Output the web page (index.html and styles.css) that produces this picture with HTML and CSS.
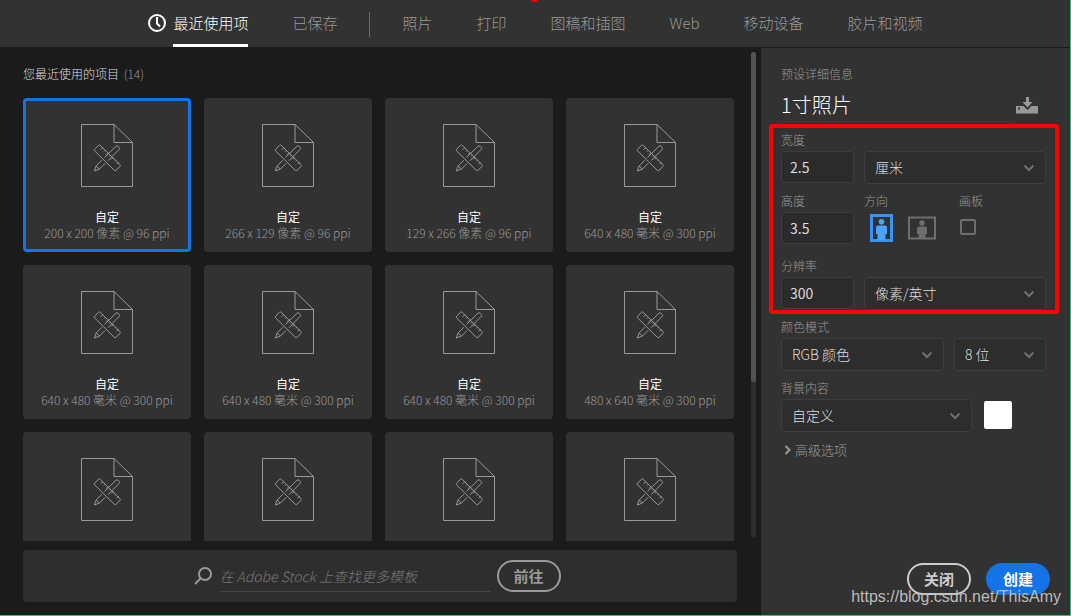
FILE: index.html
```html
<!DOCTYPE html>
<html lang="zh-CN">
<head>
    <meta charset="UTF-8">
    <meta name="viewport" content="width=device-width, initial-scale=1.0">
    <title>新建文档</title>
    <link rel="stylesheet" href="styles.css">
</head>
<body>
    <svg class="symbols" width="0" height="0">
        <symbol id="doc" viewBox="0 0 52 63">
            <path d="M33 .5H.5v62h51V18.500L33 .5v18h18.500"/>
            <path d="M23.500 33.500 35 22.200q1-.8 2 0l1.200 1.200q.8 1 0 2L27 36.700M20.800 36.300l-5.600 5.600-1.900 5.100 5.100-1.900 5.700-5.700M15.200 41.900l3.200 3.200"/>
            <path d="M17.500 21.300 13.600 25.200q-.8.9 0 1.700L33.300 46.300q.9.8 1.700 0l4-3.900q.8-.9 0-1.700L19.200 21.300q-.9-.8-1.700 0z"/>
            <path d="m21.700 23.800-2 2m4.700.4-1.500 1.500m4.100.9-2 2m4.700.4-1.500 1.500m4.100.9-2 2m4.700.4-1.500 1.500m4.100.9-2 2"/>
        </symbol>
    </svg>

    <header>
        <nav class="tabs">
            <a href="#" class="active">
                <svg class="clock" width="20" height="20" viewBox="0 0 20 20">
                    <circle cx="10" cy="10" r="8"/>
                    <path d="M10 4v6.500l3 3"/>
                </svg>
                <span>最近使用项</span>
            </a>
            <a href="#">已保存</a>
            <i class="divider"></i>
            <a href="#">照片</a>
            <a href="#">打印</a>
            <a href="#">图稿和插图</a>
            <a href="#">Web</a>
            <a href="#">移动设备</a>
            <a href="#">胶片和视频</a>
        </nav>
        <span class="marker"></span>
    </header>

    <div class="content">
        <main>
            <div class="recent">
                <div class="list">
                    <h2>您最近使用的项目 <span>(14)</span></h2>
                    <div class="grid">
                        <button class="card selected"><svg class="doc"><use href="#doc"/></svg><b>自定</b><small>200 x 200 像素 @ 96 ppi</small></button>
                        <button class="card"><svg class="doc"><use href="#doc"/></svg><b>自定</b><small>266 x 129 像素 @ 96 ppi</small></button>
                        <button class="card"><svg class="doc"><use href="#doc"/></svg><b>自定</b><small>129 x 266 像素 @ 96 ppi</small></button>
                        <button class="card"><svg class="doc"><use href="#doc"/></svg><b>自定</b><small>640 x 480 毫米 @ 300 ppi</small></button>
                        <button class="card"><svg class="doc"><use href="#doc"/></svg><b>自定</b><small>640 x 480 毫米 @ 300 ppi</small></button>
                        <button class="card"><svg class="doc"><use href="#doc"/></svg><b>自定</b><small>640 x 480 毫米 @ 300 ppi</small></button>
                        <button class="card"><svg class="doc"><use href="#doc"/></svg><b>自定</b><small>640 x 480 毫米 @ 300 ppi</small></button>
                        <button class="card"><svg class="doc"><use href="#doc"/></svg><b>自定</b><small>480 x 640 毫米 @ 300 ppi</small></button>
                        <button class="card"><svg class="doc"><use href="#doc"/></svg></button>
                        <button class="card"><svg class="doc"><use href="#doc"/></svg></button>
                        <button class="card"><svg class="doc"><use href="#doc"/></svg></button>
                        <button class="card"><svg class="doc"><use href="#doc"/></svg></button>
                    </div>
                </div>
                <div class="scrollbar"><div class="thumb"></div></div>
            </div>

            <form class="stock">
                <label for="stock">
                    <svg width="20" height="20" viewBox="0 0 20 20">
                        <circle cx="12" cy="8" r="6"/>
                        <path d="M7.500 12.500 2 18"/>
                    </svg>
                </label>
                <input type="text" id="stock" placeholder="在 Adobe Stock 上查找更多模板">
                <button type="button" class="pill">前往</button>
            </form>
        </main>

        <aside>
            <label class="caption" for="name">预设详细信息</label>
            <div class="name-row">
                <input type="text" id="name" value="1寸照片">
                <button class="save">
                    <svg width="22" height="17" viewBox="0 0 22 17">
                        <path d="M10 0h3v5h3.500l-5 5.500-5-5.500H10z"/>
                        <path d="M0 9h7.500l4 4 4-4H22v7.500H0zM2 10.500v2h2v-2z" fill-rule="evenodd"/>
                    </svg>
                </button>
            </div>

            <div class="row">
                <div class="field short">
                    <label for="width">宽度</label>
                    <input type="text" id="width" value="2.5">
                </div>
                <div class="field wide">
                    <select id="unit"><option>厘米</option></select>
                </div>
            </div>

            <div class="row tall">
                <div class="field short">
                    <label for="height">高度</label>
                    <input type="text" id="height" value="3.5">
                </div>
                <fieldset class="orientation">
                    <legend>方向</legend>
                    <div class="choices">
                        <input type="radio" name="orient" id="portrait" checked>
                        <label for="portrait">
                            <svg width="24" height="28" viewBox="0 0 24 28">
                                <path class="frame" d="M1.500 1.500h20v25h-20z"/>
                                <circle cx="11.500" cy="7.700" r="2.800"/>
                                <path d="M8 11.500h7q2 0 2 2v6.500h-1.500v6h-8v-6H6v-6.500q0-2 2-2z"/>
                            </svg>
                        </label>
                        <input type="radio" name="orient" id="landscape">
                        <label for="landscape">
                            <svg width="28" height="28" viewBox="0 0 28 28">
                                <path class="frame thin" d="M1 3.500h26v21H1z"/>
                                <circle cx="14" cy="9" r="2.700"/>
                                <path d="M11 12.500h6q2 0 2 2V20h-1.500v4h-7v-4H9v-5.500q0-2 2-2z"/>
                            </svg>
                        </label>
                    </div>
                </fieldset>
                <div class="field">
                    <label for="artboard">画板</label>
                    <input type="checkbox" id="artboard">
                </div>
            </div>

            <div class="row">
                <div class="field short">
                    <label for="resolution">分辨率</label>
                    <input type="text" id="resolution" value="300">
                </div>
                <div class="field wide">
                    <select id="resUnit"><option>像素/英寸</option></select>
                </div>
            </div>

            <div class="row">
                <div class="field wide">
                    <label for="mode">颜色模式</label>
                    <select id="mode"><option>RGB 颜色</option></select>
                </div>
                <div class="field depth">
                    <select id="depth"><option>8 位</option></select>
                </div>
            </div>

            <div class="row background">
                <div class="field wide">
                    <label for="background">背景内容</label>
                    <select id="background"><option>自定义</option></select>
                </div>
                <button class="swatch"></button>
            </div>

            <button class="advanced">
                <svg width="8" height="10" viewBox="0 0 8 10"><path d="m1.500 1 4 4-4 4"/></svg>
                高级选项
            </button>

            <div class="actions">
                <button class="pill close">关闭</button>
                <button class="pill create">创建</button>
            </div>

            <div class="highlight"></div>
            <span class="watermark">https://blog.csdn.net/ThisAmy</span>
        </aside>
    </div>
</body>
</html>
```
FILE: styles.css
```css
* {
    box-sizing: border-box;
}
body {
    margin: 0;
    height: 100vh;
    display: flex;
    flex-direction: column;
    overflow: hidden;
    background: #1b1b1b;
    color: #999;
    border-right: 1px solid #22c97d;
    border-bottom: 1px solid #22c97d;
    font-family: "Noto Sans CJK SC", sans-serif;
    font-size: 12px;
    font-weight: 300;
}
button, input, select {
    margin: 0;
    padding: 0;
    border: none;
    background: none;
    color: inherit;
    font: inherit;
}
svg {
    display: block;
    fill: none;
    stroke: currentColor;
}
.symbols {
    position: absolute;
}

/* top tabs */
header {
    position: relative;
    flex: none;
    height: 47px;
    background: #323232;
}
.tabs {
    display: flex;
    justify-content: center;
    gap: 44px;
    height: 100%;
    font-size: 15px;
    line-height: 46px;
}
.tabs a {
    color: #999;
    text-decoration: none;
}
.tabs .active {
    display: flex;
    align-items: flex-start;
    gap: 6px;
    color: #fff;
}
.active span {
    height: 47px;
    border-bottom: 3px solid #fff;
}
.clock {
    margin-top: 13px;
    stroke-width: 2;
}
.divider {
    width: 1px;
    height: 25px;
    margin: 12px -12px 0;
    background: #6a6a6a;
}
.marker {
    position: absolute;
    top: 0;
    left: 50%;
    width: 7px;
    height: 2px;
    margin-left: -4px;
    background: #f00;
    border-radius: 0 0 2px 2px;
}

.content {
    flex: 1;
    display: flex;
    min-height: 0;
}
main {
    flex: 1;
    display: flex;
    flex-direction: column;
    min-width: 0;
    gap: 9px;
    padding-bottom: 13px;
}

/* recent documents */
.recent {
    flex: 1;
    display: flex;
    gap: 17px;
    min-height: 0;
    padding: 0 5px 0 23px;
}
.list {
    flex: 1;
    overflow: hidden;
}
h2 {
    margin: 17px 0 14px;
    color: #ddd;
    font-size: 12px;
    font-weight: 300;
    line-height: 20px;
}
h2 span {
    margin-left: 2px;
    color: #999;
}
.grid {
    display: grid;
    grid-template-columns: repeat(4, minmax(0, 1fr));
    gap: 13px;
}
.card {
    display: flex;
    flex-direction: column;
    align-items: center;
    height: 154px;
    padding-top: 23px;
    background: #323232;
    border: 3px solid #323232;
    border-radius: 4px;
}
.card.selected {
    border-color: #1473e6;
}
.doc {
    width: 52px;
    height: 63px;
    margin-bottom: 22px;
    color: #999;
}
.card b {
    color: #fff;
    font-weight: 400;
    line-height: 16px;
}
.card small {
    font-size: 12px;
    line-height: 16px;
    white-space: nowrap;
}
.scrollbar {
    width: 5px;
    margin: 5px 0 4px;
    background: #2e2e2e;
    border-radius: 3px;
}
.thumb {
    height: 68%;
    background: #535353;
    border-radius: 3px;
}

/* stock search */
.stock {
    display: flex;
    align-items: center;
    justify-content: center;
    height: 52px;
    margin: 0 24px 0 23px;
    padding-right: 7px;
    background: #2e2e2e;
    border-radius: 4px;
}
.stock svg {
    stroke-width: 2;
}
.stock input {
    width: 270px;
    height: 32px;
    margin: 0 7px;
    border-bottom: 1px solid #444;
    font-size: 14px;
    font-style: italic;
}
.stock input::placeholder {
    color: #777;
}
.pill {
    width: 64px;
    height: 32px;
    border: 2px solid #999;
    border-radius: 16px;
    font-size: 15px;
    font-weight: 700;
    line-height: 24px;
}

/* preset details */
aside {
    position: relative;
    flex: none;
    display: flex;
    flex-direction: column;
    width: 309px;
    margin-top: 1px;
    padding: 16px 24px 20px 20px;
    background: #323232;
}
.caption {
    line-height: 20px;
}
.name-row {
    display: flex;
    align-items: center;
    gap: 5px;
    height: 38px;
    margin-bottom: 7px;
    padding-right: 8px;
}
.name-row input {
    flex: 1;
    min-width: 0;
    height: 38px;
    padding-top: 4px;
    border-bottom: 1px solid #3e3e3e;
    color: #fff;
    font-size: 20px;
}
.save {
    padding-top: 4px;
}
.save svg {
    fill: #999;
    stroke: none;
}
.row {
    display: flex;
    align-items: flex-end;
    gap: 10px;
    margin-bottom: 6px;
}
.row.tall {
    align-items: flex-start;
    height: 59px;
}
.field label, legend {
    display: block;
    padding: 0 0 1px;
    line-height: 21px;
}
.short {
    width: 73px;
    height: 55px;
}
.wide {
    flex: 1;
}
.depth {
    width: 92px;
}
.field input[type="text"], select {
    display: block;
    width: 100%;
    height: 33px;
    padding: 0 8px;
    background: #2b2b2b;
    border: 1px solid #3e3e3e;
    border-radius: 4px;
    color: #ddd;
    font-size: 14px;
}
.field input[type="text"] {
    height: 32px;
    font-weight: 400;
}
select {
    appearance: none;
    padding: 0 11px 2px 10px;
    background: #2d2d2d url("data:image/svg+xml,%3Csvg xmlns='http://www.w3.org/2000/svg' width='12' height='8'%3E%3Cpath d='M1.500 1.500 6 6l4.500-4.500' fill='none' stroke='%23707070' stroke-width='2'/%3E%3C/svg%3E") no-repeat right 10px center;
}
.orientation {
    width: 85px;
    margin: 0;
    padding: 0;
    border: none;
}
.choices {
    display: flex;
    gap: 14px;
    padding: 2px 0 0 6px;
}
.choices input {
    position: absolute;
    opacity: 0;
}
.choices label {
    color: #6e6e6e;
}
.choices input:checked + label {
    color: #4ba3fb;
}
.choices svg {
    fill: currentColor;
    stroke: none;
}
.choices .frame {
    fill: none;
    stroke: currentColor;
    stroke-width: 3;
}
.choices .thin {
    stroke-width: 2;
}
.choices input:checked + label .frame {
    stroke: #3a92f5;
}
input[type="checkbox"] {
    appearance: none;
    display: block;
    width: 16px;
    height: 16px;
    margin: 7px 0 0 1px;
    border: 2px solid #6e6e6e;
    border-radius: 2px;
}
.background {
    gap: 12px;
    padding-right: 34px;
}
.swatch {
    width: 28px;
    height: 28px;
    margin-bottom: 3px;
    background: #fff;
    border-radius: 2px;
}
.advanced {
    display: flex;
    align-items: center;
    align-self: flex-start;
    gap: 3px;
    padding: 1px 0 0 3px;
    font-size: 13px;
    line-height: 22px;
}
.advanced svg {
    stroke-width: 2;
}
.actions {
    display: flex;
    justify-content: flex-end;
    gap: 15px;
    margin: auto -4px 0 0;
}
.close {
    border-color: #ccc;
    color: #ccc;
}
.create {
    background: #1473e6;
    border-color: #1473e6;
    color: #fff;
}

/* red frame round the size settings */
.highlight {
    position: absolute;
    top: 76px;
    left: 8px;
    right: 11px;
    height: 190px;
    border: 4px solid #f00;
    border-radius: 3px;
    pointer-events: none;
}
.watermark {
    position: absolute;
    right: 9px;
    bottom: 8px;
    color: #bbb;
    font-family: "Liberation Sans", Arial, sans-serif;
    font-size: 16px;
    font-weight: 400;
    line-height: 20px;
}
```
